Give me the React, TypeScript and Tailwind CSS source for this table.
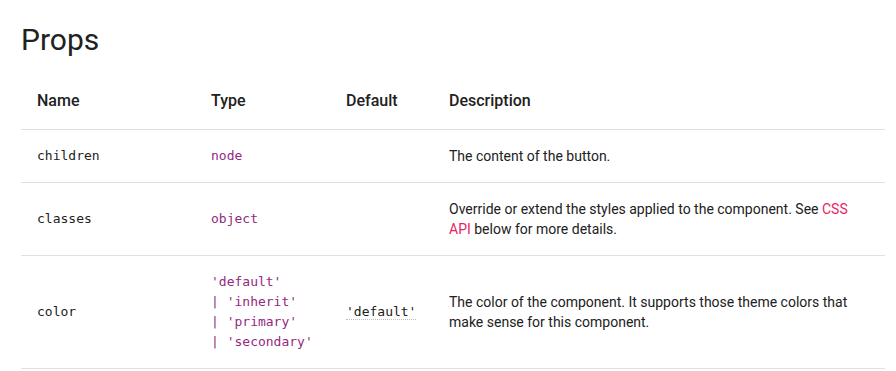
const rows = [
  {
    name: "children",
    type: ["node"],
    def: "",
    desc: <>The content of the button.</>,
  },
  {
    name: "classes",
    type: ["object"],
    def: "",
    desc: (
      <>
        Override or extend the styles applied to the component. See{" "}
        <a className="text-[#e91e63]">CSS API</a> below for more details.
      </>
    ),
  },
  {
    name: "color",
    type: ["'default'", "| 'inherit'", "| 'primary'", "| 'secondary'"],
    def: "'default'",
    desc: (
      <>
        The color of the component. It supports those theme colors that make
        sense for this component.
      </>
    ),
  },
];

const mono = "font-['DejaVu_Sans_Mono',monospace] text-[13px]";

export default function App() {
  return (
    <main className="min-h-[371px] bg-white px-[21px] pt-[22px] font-['Roboto',sans-serif] text-[#212121]">
      <h2 className="text-[30px] leading-[35px] font-normal">Props</h2>
      <table className="mt-4 w-[864px] border-collapse text-left">
        <thead>
          <tr className="border-b border-[#e0e0e0]">
            <th className="w-[174px] p-4 text-[16px] leading-6 font-medium">Name</th>
            <th className="w-[135px] p-4 text-[16px] leading-6 font-medium">Type</th>
            <th className="w-[103px] p-4 text-[16px] leading-6 font-medium">Default</th>
            <th className="p-4 text-[16px] leading-6 font-medium">Description</th>
          </tr>
        </thead>
        <tbody>
          {rows.map((row) => (
            <tr key={row.name} className="border-b border-[#e0e0e0]">
              <td className={`p-4 align-middle leading-5 ${mono}`}>{row.name}</td>
              <td className={`p-4 align-middle leading-5 text-[#932981] ${mono}`}>
                {row.type.map((t) => (
                  <div key={t} className="whitespace-pre">{t}</div>
                ))}
              </td>
              <td className={`p-4 align-middle leading-5 ${mono}`}>
                {row.def && (
                  <span className="border-b border-dotted border-[#bdbdbd]">{row.def}</span>
                )}
              </td>
              <td className="p-4 align-middle text-[14px] leading-5">{row.desc}</td>
            </tr>
          ))}
        </tbody>
      </table>
    </main>
  );
}
